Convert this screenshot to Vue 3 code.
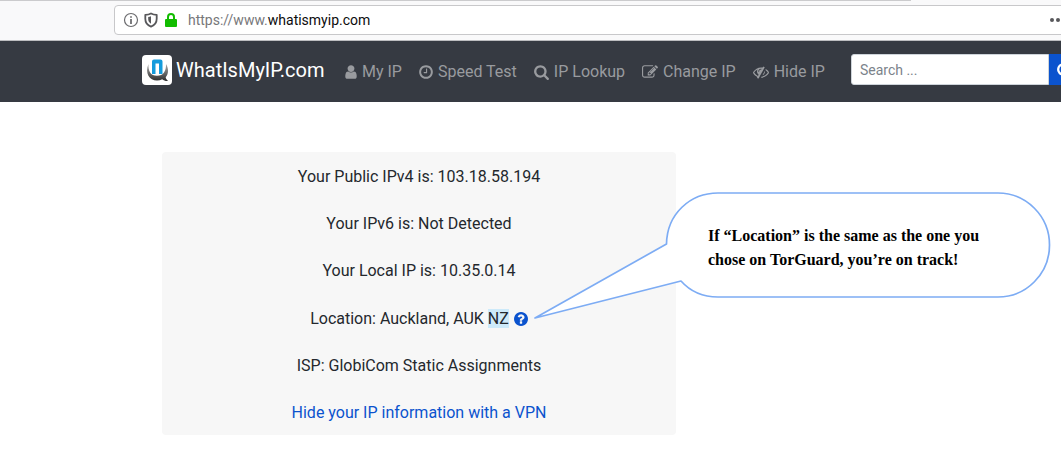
<script setup>
const navItems = [
  {
    label: 'My IP', box: '256 0 1280 1792', width: 12,
    path: 'M1536 1399q0 109-62.5 187t-150.5 78h-854q-88 0-150.5-78t-62.5-187q0-85 8.5-160.5t31.5-152 58.5-131 94-89 134.5-34.5q131 128 313 128t313-128q76 0 134.5 34.5t94 89 58.5 131 31.5 152 8.5 160.5zm-256-887q0 159-112.5 271.5t-271.5 112.5-271.5-112.5-112.5-271.5 112.5-271.5 271.5-112.5 271.5 112.5 112.5 271.5z',
  },
  {
    label: 'Speed Test', box: '128 0 1536 1792', width: 14,
    path: 'M1024 544v448q0 14-9 23t-23 9h-320q-14 0-23-9t-9-23v-64q0-14 9-23t23-9h224v-352q0-14 9-23t23-9h64q14 0 23 9t9 23zm416 352q0-148-73-273t-198-198-273-73-273 73-198 198-73 273 73 273 198 198 273 73 273-73 198-198 73-273zm224 0q0 209-103 385.5t-279.5 279.5-385.5 103-385.5-103-279.5-279.5-103-385.5 103-385.5 279.5-279.5 385.5-103 385.5 103 279.5 279.5 103 385.5z',
  },
  {
    label: 'IP Lookup', box: '64 0 1664 1792', width: 15,
    path: 'M1216 832q0-185-131.5-316.5t-316.5-131.5-316.5 131.5-131.5 316.5 131.5 316.5 316.5 131.5 316.5-131.5 131.5-316.5zm512 832q0 52-38 90t-90 38q-54 0-90-38l-343-342q-179 124-399 124-143 0-273.5-55.5t-225-150-150-225-55.5-273.5 55.5-273.5 150-225 225-150 273.5-55.5 273.5 55.5 225 150 150 225 55.5 273.5q0 220-124 399l343 343q37 37 37 90z',
  },
  {
    label: 'Change IP', box: '0 0 1792 1792', width: 16,
    path: 'M888 1184l116-116-152-152-116 116v56h96v96h56zm440-720q-16-16-33 1l-350 350q-17 17-1 33t33-1l350-350q17-17 1-33zm80 594v190q0 119-84.5 203.5t-203.5 84.5h-832q-119 0-203.5-84.5t-84.5-203.5v-832q0-119 84.5-203.5t203.5-84.5h832q63 0 117 25 15 7 18 23 3 17-9 29l-49 49q-14 14-32 8-23-6-45-6h-832q-66 0-113 47t-47 113v832q0 66 47 113t113 47h832q66 0 113-47t47-113v-126q0-13 9-22l64-64q15-15 35-7t20 29zm-96-738l288 288-672 672h-288v-288zm444 132l-92 92-288-288 92-92q28-28 68-28t68 28l152 152q28 28 28 68t-28 68z',
  },
  {
    label: 'Hide IP', box: '0 0 1792 1792', width: 16,
    path: 'M555 1335l78-141q-87-63-136-159t-49-203q0-121 61-225-229 117-381 353 167 258 427 375zm389-759q0-20-14-34t-34-14q-125 0-214.5 89.5t-89.5 214.5q0 20 14 34t34 14 34-14 14-34q0-86 61-147t147-61q20 0 34-14t14-34zm363-191q0 7-1 9-106 189-316 567t-315 566l-49 89q-10 16-28 16-12 0-134-70-16-10-16-28 0-12 44-87-143-65-263.5-173t-208.5-245q-20-31-20-69t20-69q153-235 380-371t496-136q89 0 180 17l54-97q10-16 28-16 5 0 18 6t31 15.5 33 18.5 31.5 18.5 19.5 11.5q16 10 16 27zm37 447q0 139-79 253.5t-209 164.5l280-502q8 45 8 84zm448 128q0 35-20 69-39 64-109 145-150 172-347.5 267t-419.5 95l74-132q212-18 392.5-137t301.5-307q-115-179-282-294l63-112q95 64 182.5 153t144.5 184q20 34 20 69z',
  },
]
</script>

<template>
  <div class="page">
    <div class="toolbar">
      <div class="tab-edge"></div>
      <div class="urlbar">
        <svg class="url-icon" viewBox="0 0 16 16" aria-hidden="true">
          <circle cx="8" cy="8" r="6.5" fill="none" stroke="#6b6b6e" stroke-width="1.2" />
          <path d="M7.2 4.200h1.600v1.600h-1.600zM7.200 7h1.600v5h-1.600z" fill="#5c5c5f" />
        </svg>
        <svg class="url-icon" viewBox="0 0 16 16" aria-hidden="true">
          <path d="M8 1.500c1.800 1 3.700 1.300 5.700 1.300v4c0 4-2.300 6.600-5.700 7.800-3.400-1.200-5.700-3.800-5.700-7.800v-4c2 0 3.900-.3 5.700-1.300z" fill="none" stroke="#58585b" stroke-width="1.8" stroke-linejoin="round" />
          <path d="M8 4.300v7.400c-1.800-1-2.800-2.500-2.800-4.700v-2.100c1 0 2-.2 2.800-.6z" fill="#58585b" />
        </svg>
        <svg class="url-icon" viewBox="0 0 16 16" aria-hidden="true">
          <rect x="2" y="7" width="12" height="8" rx="1" fill="#12bc00" />
          <path d="M5 7.500v-2.500a3 3 0 0 1 6 0v2.500" fill="none" stroke="#12bc00" stroke-width="2" />
        </svg>
        <span class="address">https://www.<b>whatismyip.com</b></span>
        <button class="more" type="button" aria-label="Page actions"><i></i><i></i><i></i></button>
      </div>
    </div>

    <header class="navbar">
      <a class="brand" href="#">
        <svg class="logo" viewBox="0 0 30 30" aria-hidden="true">
          <defs>
            <linearGradient id="ring" x1="0" y1="0" x2="0" y2="1">
              <stop offset="0" stop-color="#aaa" />
              <stop offset="1" stop-color="#2c2c2c" />
            </linearGradient>
          </defs>
          <rect width="30" height="30" rx="4" fill="#fff" />
          <path d="M6.500 9C2.500 18 7.500 25.500 15 25.500c2 0 3.700-.4 5.200-1.200 1.600 1.300 3.700 2 6 1.700-1.400-1-2.200-2.200-2.500-3.800C27 18.500 26.500 13 24 9c.3 7-2.500 11.800-9 11.800S6 16 6.500 9z" fill="url(#ring)" />
          <path d="M10 19V6.500q0-2 2-2h6.500q2 0 2 2V19h-3.500V8.500h-3.500V19z" fill="#149bdc" />
        </svg>
        <span>WhatIsMyIP.com</span>
      </a>
      <nav class="links">
        <a v-for="item in navItems" :key="item.label" href="#">
          <svg :viewBox="item.box" :width="item.width" height="16" aria-hidden="true"><path :d="item.path" /></svg>
          <span>{{ item.label }}</span>
        </a>
      </nav>
      <form class="search" @submit.prevent>
        <input type="text" placeholder="Search ..." aria-label="Search" />
        <button type="submit" aria-label="Search">
          <svg viewBox="64 0 1664 1792" width="15" height="16" aria-hidden="true"><path :d="navItems[2].path" /></svg>
        </button>
      </form>
    </header>

    <main class="content">
      <section class="card">
        <p>Your Public IPv4 is: 103.18.58.194</p>
        <p>Your IPv6 is: Not Detected</p>
        <p>Your Local IP is: 10.35.0.14</p>
        <p class="location">
          <span>Location: Auckland, AUK <mark>NZ</mark></span>
          <a href="#" aria-label="About this location">
            <svg viewBox="128 128 1536 1536" width="14" height="14" aria-hidden="true">
              <path d="M1024 1376v-192q0-14-9-23t-23-9h-192q-14 0-23 9t-9 23v192q0 14 9 23t23 9h192q14 0 23-9t9-23zm256-672q0-88-55.5-163t-138.5-116-170-41q-243 0-371 213-15 24 8 42l132 100q7 6 19 6 16 0 25-12 53-68 86-92 34-24 86-24 48 0 85.500 26t37.500 59q0 38-20 61t-68 45q-63 28-115.500 86.500t-52.500 125.500v36q0 14 9 23t23 9h192q14 0 23-9t9-23q0-19 21.500-49.500t54.500-49.500q32-18 49-28.500t46-35 44.500-48 28-60.500 12.500-81zm384 192q0 209-103 385.500t-279.500 279.500-385.500 103-385.500-103-279.500-279.500-103-385.500 103-385.500 279.500-279.500 385.500-103 385.500 103 279.500 279.500 103 385.500z" />
            </svg>
          </a>
        </p>
        <p>ISP: GlobiCom Static Assignments</p>
        <p><a href="#">Hide your IP information with a VPN</a></p>
      </section>

      <aside class="callout">
        <svg class="bubble" viewBox="0 0 518 128" aria-hidden="true">
          <path d="M132.500 52C133 22 156 1 184 1H464A51.500 52 0 0 1 464 105H184C168 105 155 98 147 89L1 126Z" fill="#fff" stroke="#7dacf4" stroke-width="1.700" stroke-linejoin="round" />
        </svg>
        <p>If “Location” is the same as the one you<br />chose on TorGuard, you’re on track!</p>
      </aside>
    </main>
  </div>
</template>

<style>
body {
  margin: 0;
  background: #fff;
}
</style>

<style scoped>
.page {
  overflow: hidden;
  color: #24282d;
  font: 16px/24px Roboto, "Liberation Sans", sans-serif;
}
a {
  color: #0b53ce;
  text-decoration: none;
}
p {
  margin: 0;
}
button {
  border: 0;
  padding: 0;
}
.toolbar {
  background: #f9f9fa;
  border-bottom: 1px solid #bdbdc0;
}
.tab-edge {
  height: 1px;
  margin-right: 150px;
  background: #cbcbcd;
}
.urlbar {
  display: flex;
  align-items: center;
  gap: 4px;
  height: 28px;
  margin: 4px -20px 5px 114px;
  padding: 0 8px;
  background: #fff;
  border: 1px solid #c8c8ca;
  border-radius: 4px;
}
.url-icon {
  width: 16px;
  height: 16px;
  flex: none;
}
.address {
  flex: 1;
  margin-left: 5px;
  color: #77777a;
  font-size: 14px;
}
.address b {
  color: #0c0c0d;
  font-weight: 400;
}
.more {
  display: flex;
  gap: 2px;
  margin-right: 6px;
  background: none;
}
.more i {
  width: 4px;
  height: 4px;
  border-radius: 50%;
  background: #58585b;
}
.navbar {
  display: flex;
  align-items: center;
  padding: 13px 0 17px 142px;
  background: #363a42;
}
.brand {
  display: flex;
  align-items: center;
  gap: 4px;
  width: 203px;
  flex: none;
  color: #fff;
  font-size: 20px;
}
.logo {
  width: 30px;
  height: 30px;
  flex: none;
}
.links {
  display: flex;
  gap: 17px;
  flex: none;
  padding-top: 4px;
}
.links a {
  display: flex;
  align-items: center;
  gap: 5px;
  color: #999b9f;
  white-space: nowrap;
}
.links svg,
.search svg,
.location svg {
  display: block;
  fill: currentColor;
}
.search {
  display: flex;
  flex: 1;
  min-width: 230px;
  margin: 0 -20px 0 26px;
}
.search input {
  box-sizing: border-box;
  flex: 1;
  min-width: 0;
  height: 31px;
  padding: 0 8px;
  border: 1px solid #ced4da;
  border-radius: 3px 0 0 3px;
  background: #fff;
  font: 14px/20px Roboto, "Liberation Sans", sans-serif;
}
.search input::placeholder {
  color: #7b838b;
  opacity: 1;
}
.search button {
  width: 32px;
  padding-left: 8px;
  background: #0b53ce;
  color: #fff;
}
.content {
  position: relative;
  padding: 50px 0 14px 162px;
}
.card {
  display: flex;
  flex-direction: column;
  justify-content: space-between;
  box-sizing: border-box;
  max-width: 514px;
  min-height: 283px;
  padding: 13px 16px 10px;
  border-radius: 4px;
  background: #f7f7f7;
  text-align: center;
}
.location {
  display: flex;
  align-items: center;
  justify-content: center;
  gap: 5px;
}
mark {
  background: #cdeafa;
  color: inherit;
}
.callout {
  position: absolute;
  top: 90px;
  left: 534px;
  width: 518px;
  color: #000;
  font: bold 16px/24px "Liberation Serif", serif;
}
.bubble {
  display: block;
  width: 100%;
}
.callout p {
  position: absolute;
  top: 32px;
  left: 174px;
  white-space: nowrap;
}
</style>
